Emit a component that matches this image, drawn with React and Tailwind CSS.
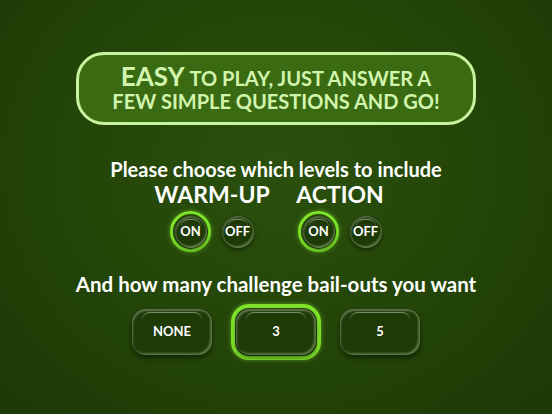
const font = { fontFamily: 'Lato, "Open Sans", sans-serif' };

function Round({ label, active }) {
  return (
    <div
      className={`flex items-center justify-center rounded-full ${
        active ? 'h-[41px] w-[41px] border-[3px] border-[#7ee32a] shadow-[0_0_4px_rgba(126,227,42,0.6)]' : 'h-[41px] w-[33px]'
      }`}
    >
      <div className="relative flex h-[32px] w-[32px] items-center justify-center rounded-full bg-[#1d3906] shadow-[inset_-1px_-2px_2px_rgba(220,255,200,0.35),inset_1px_2px_2px_rgba(255,255,255,0.25),0_2px_4px_rgba(0,0,0,0.45)]">
        <div className="absolute left-[6px] right-[6px] top-[3px] h-[8px] rounded-t-full border-t border-white/40" />
        <span className="text-[13px] font-bold text-white">{label}</span>
      </div>
    </div>
  );
}

function Pill({ label, active }) {
  return (
    <div
      className={`flex items-center justify-center rounded-[18px] ${
        active ? 'h-[56px] w-[90px] border-[4px] border-[#7ee32a] shadow-[0_0_4px_rgba(126,227,42,0.6)]' : 'h-[56px] w-[82px]'
      }`}
    >
      <div className="relative flex h-[46px] w-[80px] items-center justify-center rounded-[14px] bg-[#1e3a07] shadow-[inset_-2px_-2px_2px_rgba(220,255,200,0.3),inset_1px_2px_2px_rgba(255,255,255,0.3),0_3px_5px_rgba(0,0,0,0.45)]">
        <div className="absolute left-[10px] right-[10px] top-[3px] h-[8px] rounded-t-[10px] border-t border-white/40" />
        <span className="text-[13px] font-bold text-white">{label}</span>
      </div>
    </div>
  );
}

function Level({ title }) {
  return (
    <div className="flex w-[118px] flex-col items-center">
      <div className="whitespace-nowrap text-[23px] font-bold leading-none text-white">{title}</div>
      <div className="mt-[5px] flex items-center gap-[10px]">
        <Round label="ON" active />
        <Round label="OFF" />
      </div>
    </div>
  );
}

export default function App() {
  return (
    <div
      style={font}
      className="flex h-[414px] w-full flex-col items-center bg-[radial-gradient(ellipse_at_50%_40%,#2b500d_0%,#244709_45%,#1c3906_100%)] pt-[52px]"
    >
      <div className="flex h-[73px] w-[400px] flex-col items-center justify-center rounded-[28px] border-[3px] border-[#c8f4a0] bg-[#3a6b13] text-[#d2f5ad]">
        <div className="flex items-baseline gap-[5px] whitespace-nowrap font-bold leading-[23px]">
          <span className="text-[26px]">EASY</span>
          <span className="text-[20px]">TO PLAY, JUST ANSWER A</span>
        </div>
        <div className="whitespace-nowrap text-[20px] font-bold leading-[22px]">FEW SIMPLE QUESTIONS AND GO!</div>
      </div>

      <div className="mt-[34px] whitespace-nowrap text-[20px] font-bold leading-none text-white">
        Please choose which levels to include
      </div>

      <div className="mt-[4px] flex gap-[10px]">
        <Level title="WARM-UP" />
        <Level title="ACTION" />
      </div>

      <div className="mt-[22px] whitespace-nowrap text-[20.5px] font-bold leading-none text-white">
        And how many challenge bail-outs you want
      </div>

      <div className="mt-[9px] flex items-center gap-[18px]">
        <Pill label="NONE" />
        <Pill label="3" active />
        <Pill label="5" />
      </div>
    </div>
  );
}
